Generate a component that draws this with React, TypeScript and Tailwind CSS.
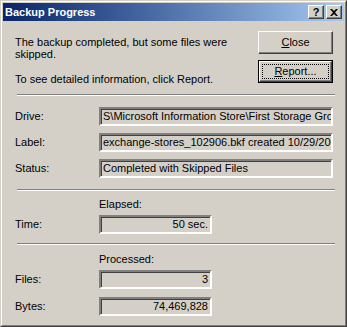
import React from "react";

const font = { fontFamily: '"Liberation Sans", Arial, sans-serif' };

function Field({ value, right, w }: { value: string; right?: boolean; w: string }) {
  return (
    <div
      className={`${w} h-[19px] border-2 border-t-[#808080] border-l-[#808080] border-b-white border-r-white shadow-[inset_1px_1px_0_#404040,inset_-1px_-1px_0_#d4d0c8] flex items-center overflow-hidden whitespace-nowrap ${
        right ? "justify-end pr-[2px]" : "pl-[2px]"
      }`}
    >
      {value}
    </div>
  );
}

function Separator() {
  return <div className="ml-[14px] w-[318px] h-[2px] border-t border-t-[#808080] border-b border-b-white" />;
}

export default function App() {
  return (
    <div
      className="w-[347px] h-[327px] bg-[#d4d0c8] border border-t-[#d4d0c8] border-l-[#d4d0c8] border-b-[#404040] border-r-[#404040] text-[11px] text-black"
      style={font}
    >
      <div className="h-full border border-t-white border-l-white border-b-[#808080] border-r-[#808080] p-[1px] flex flex-col">
        {/* Title bar */}
        <div className="h-[18px] bg-gradient-to-r from-[#0a246a] to-[#a6caf0] flex items-center pl-[2px] pr-[2px]">
          <span className="text-white font-bold text-[11px] flex-1">Backup Progress</span>
          <div className="flex items-center">
            <div className="w-[16px] h-[14px] bg-[#d4d0c8] border border-t-white border-l-white border-b-[#404040] border-r-[#404040] shadow-[inset_-1px_-1px_0_#808080] flex items-center justify-center font-bold text-[11px] leading-none">
              ?
            </div>
            <div className="w-[16px] h-[14px] ml-[2px] bg-[#d4d0c8] border border-t-white border-l-white border-b-[#404040] border-r-[#404040] shadow-[inset_-1px_-1px_0_#808080] flex items-center justify-center">
              <svg width="8" height="7" viewBox="0 0 8 7">
                <path d="M0 0h2l2 2 2-2h2L5 3.5 8 7H6L4 5 2 7H0l3-3.5z" fill="#000" />
              </svg>
            </div>
          </div>
        </div>

        {/* Message + buttons */}
        <div className="flex pl-[12px] pr-[11px] pt-[10px]">
          <div className="flex-1 leading-[12px] pt-[5px]">
            <p>The backup completed, but some files were</p>
            <p>skipped.</p>
            <p className="mt-[13px]">To see detailed information, click Report.</p>
          </div>
          <div className="flex flex-col gap-[6px]">
            <button className="w-[75px] h-[23px] bg-[#d4d0c8] border border-t-white border-l-white border-b-[#404040] border-r-[#404040] shadow-[inset_-1px_-1px_0_#808080]">
              <span className="underline">C</span>lose
            </button>
            <button className="w-[75px] h-[23px] bg-[#d4d0c8] border border-black p-0">
              <div className="w-full h-full border border-t-white border-l-white border-b-[#404040] border-r-[#404040] shadow-[inset_-1px_-1px_0_#808080] p-[2px]">
                <div className="w-full h-full border border-dotted border-black flex items-center justify-center">
                  <span>
                    <span className="underline">R</span>eport...
                  </span>
                </div>
              </div>
            </button>
          </div>
        </div>

        <div className="mt-[9px]">
          <Separator />
        </div>

        {/* Drive / Label / Status */}
        <div className="pl-[12px] mt-[11px] flex flex-col gap-[7px]">
          {[
            ["Drive:", "S\\Microsoft Information Store\\First Storage Group"],
            ["Label:", "exchange-stores_102906.bkf created 10/29/2006"],
            ["Status:", "Completed with Skipped Files"],
          ].map(([k, v]) => (
            <div key={k} className="flex items-center">
              <span className="w-[84px]">{k}</span>
              <Field value={v} w="w-[234px]" />
            </div>
          ))}
        </div>

        <div className="mt-[11px]">
          <Separator />
        </div>

        {/* Elapsed */}
        <div className="pl-[12px] mt-[7px]">
          <div className="pl-[84px] leading-[13px]">Elapsed:</div>
          <div className="flex items-center mt-[4px]">
            <span className="w-[84px]">Time:</span>
            <Field value="50 sec." right w="w-[113px]" />
          </div>
        </div>

        <div className="mt-[9px]">
          <Separator />
        </div>

        {/* Processed */}
        <div className="pl-[12px] mt-[8px]">
          <div className="pl-[84px] leading-[13px]">Processed:</div>
          <div className="flex items-center mt-[4px]">
            <span className="w-[84px]">Files:</span>
            <Field value="3" right w="w-[113px]" />
          </div>
          <div className="flex items-center mt-[8px]">
            <span className="w-[84px]">Bytes:</span>
            <Field value="74,469,828" right w="w-[113px]" />
          </div>
        </div>
      </div>
    </div>
  );
}
